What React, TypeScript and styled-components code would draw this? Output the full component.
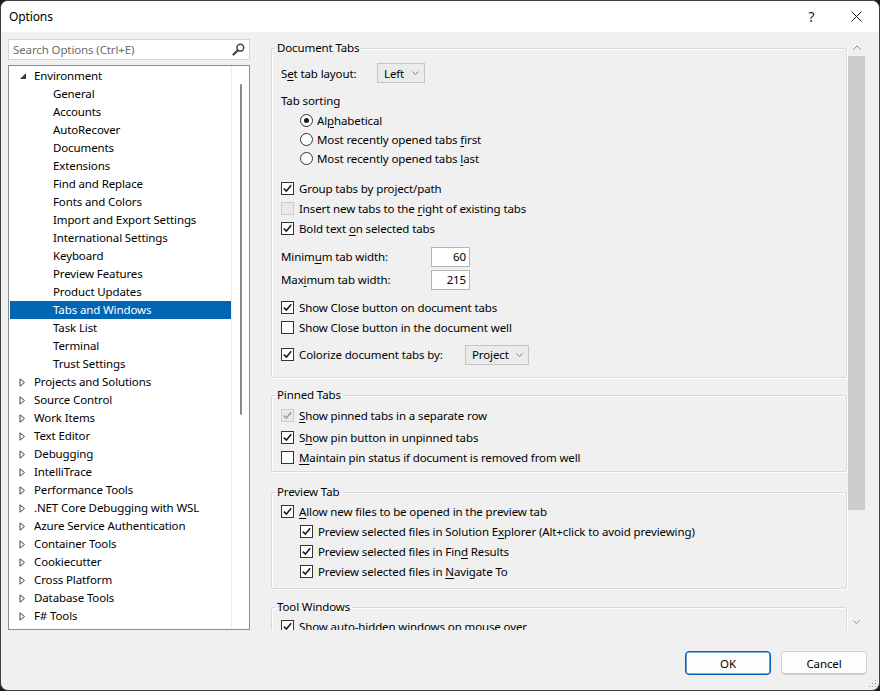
import React from 'react';
import styled, { createGlobalStyle } from 'styled-components';

const GlobalStyle = createGlobalStyle`
  html, body {
    margin: 0;
    padding: 0;
    background: #1c1c1c;
  }
  body {
    font-family: "Noto Sans", "Open Sans", sans-serif;
    font-size: 11.5px;
    letter-spacing: -0.12px;
    color: #000;
  }
  * { box-sizing: border-box; }
`;

const Window = styled.div`
  position: relative;
  width: 880px;
  height: 691px;
  background: #f0f0f0;
  border: 1px solid #3d3d3d;
  border-radius: 8px;
  overflow: hidden;
  display: flex;
  flex-direction: column;
`;

const TitleBar = styled.div`
  flex: none;
  height: 31px;
  background: #fff;
  display: flex;
  align-items: center;
  padding-left: 8px;
  font-size: 12px;
`;

const TitleButtons = styled.div`
  margin-left: auto;
  display: flex;
  height: 100%;
`;

const TitleButton = styled.div`
  width: 45px;
  height: 100%;
  display: flex;
  align-items: center;
  justify-content: center;
  font-size: 14px;
  color: #1a1a1a;
`;

const Body = styled.div`
  flex: none;
  height: 598px;
  display: flex;
  gap: 20px;
  padding: 7px 14px 0 7px;
`;

const LeftColumn = styled.div`
  width: 242px;
  flex: none;
  display: flex;
  flex-direction: column;
  gap: 5px;
`;

const SearchBox = styled.div`
  height: 21px;
  flex: none;
  background: #fff;
  border: 1px solid #d3d3d3;
  display: flex;
  align-items: center;
  padding: 0 4px 1px 4px;
  color: #6d6d6d;
  svg { margin-left: auto; }
`;

const Tree = styled.div`
  flex: 1;
  background: #fff;
  border: 1px solid #8c8c8c;
  display: flex;
  overflow: hidden;
`;

const TreeList = styled.div`
  flex: 1;
  padding: 1px 0 0 1px;
  display: flex;
  flex-direction: column;
`;

const TreeRow = styled.div<{ $level: number; $selected?: boolean }>`
  height: 18px;
  flex: none;
  display: flex;
  align-items: center;
  padding-left: ${(p) => 9 + p.$level * 19}px;
  padding-bottom: 2px;
  background: ${(p) => (p.$selected ? '#0066b4' : 'transparent')};
  color: ${(p) => (p.$selected ? '#fff' : '#000')};
  white-space: nowrap;
`;

const Arrow = styled.span`
  width: 15px;
  flex: none;
  display: flex;
  align-items: center;
  padding-top: 2px;
`;

const TreeTrack = styled.div`
  width: 18px;
  flex: none;
  border-left: 1px solid #ececec;
  display: flex;
  flex-direction: column;
  align-items: center;
  padding-top: 18px;
`;

const TreeThumb = styled.div`
  width: 2px;
  height: 331px;
  background: #8a8a8a;
  border-radius: 1px;
`;

const RightColumn = styled.div`
  flex: 1;
  display: flex;
`;

const Viewport = styled.div`
  width: 578px;
  flex: none;
  height: 591px;
  overflow: hidden;
  padding: 1px 1px 0 1px;
`;

const ScrollBar = styled.div`
  width: 17px;
  flex: none;
  height: 591px;
  display: flex;
  flex-direction: column;
`;

const ScrollArrow = styled.div`
  height: 17px;
  flex: none;
  display: flex;
  align-items: center;
  justify-content: center;
`;

const ScrollThumb = styled.div`
  height: 454px;
  flex: none;
  background: #cdcdcd;
`;

const Spacer = styled.div`
  flex: 1;
`;

const Group = styled.fieldset<{ $mt: number; $pb: number }>`
  margin: ${(p) => p.$mt}px 0 0 0;
  padding: 0 0 ${(p) => p.$pb}px 3px;
  border: 1px solid #d9d9d9;
  border-radius: 2px;
  box-shadow: 1px 1px 0 #fff, inset 1px 1px 0 #fff;
  min-width: 0;
`;

const Legend = styled.legend`
  padding: 0 2px;
  line-height: 16px;
`;

const Row = styled.div<{ $h?: number; $mt?: number; $indent?: number; $gap?: number }>`
  height: ${(p) => p.$h ?? 20}px;
  margin-top: ${(p) => p.$mt ?? 0}px;
  padding-left: ${(p) => 6 + (p.$indent ?? 0)}px;
  display: flex;
  align-items: center;
  gap: ${(p) => p.$gap ?? 5}px;
  white-space: nowrap;
`;

const Label = styled.span<{ $w?: number }>`
  width: ${(p) => (p.$w ? `${p.$w}px` : 'auto')};
  flex: none;
`;

const U = styled.span`
  text-decoration: underline;
  text-underline-offset: 2px;
`;

const Box = styled.span<{ $disabled?: boolean }>`
  width: 13px;
  height: 13px;
  flex: none;
  border: 1px solid ${(p) => (p.$disabled ? '#cccccc' : '#333')};
  background: ${(p) => (p.$disabled ? '#e9e9e9' : '#fff')};
  display: inline-flex;
  align-items: center;
  justify-content: center;
`;

const RadioCircle = styled.span<{ $on?: boolean }>`
  width: 13px;
  height: 13px;
  flex: none;
  border: 1px solid #333;
  border-radius: 50%;
  background: #fff;
  display: inline-flex;
  align-items: center;
  justify-content: center;
  &::after {
    content: '';
    width: 5px;
    height: 5px;
    border-radius: 50%;
    background: ${(p) => (p.$on ? '#1a1a1a' : 'transparent')};
  }
`;

const Combo = styled.div<{ $w: number }>`
  width: ${(p) => p.$w}px;
  height: 20px;
  flex: none;
  border: 1px solid #c6c6c6;
  background: #ebebeb;
  display: flex;
  align-items: center;
  justify-content: space-between;
  padding: 0 5px 0 6px;
`;

const NumBox = styled.div`
  width: 39px;
  height: 20px;
  flex: none;
  border: 1px solid #b4b4b4;
  background: #fff;
  display: flex;
  align-items: center;
  justify-content: flex-end;
  padding-right: 3px;
`;

const Footer = styled.div`
  flex: 1;
  display: flex;
  justify-content: flex-end;
  align-items: flex-start;
  gap: 10px;
  padding: 21px 12px 0 0;
`;

const Button = styled.div<{ $primary?: boolean }>`
  width: 86px;
  height: 24px;
  border-radius: 4px;
  background: #fdfdfd;
  border: 1px solid ${(p) => (p.$primary ? '#005fb8' : '#d0d0d0')};
  box-shadow: ${(p) => (p.$primary ? 'inset 0 0 0 0.6px #005fb8' : 'inset 0 -1px 0 #c4c4c4')};
  display: flex;
  align-items: center;
  justify-content: center;
`;

const Grip = styled.svg`
  position: absolute;
  right: 2px;
  bottom: 2px;
`;

const Check = ({ color = '#1a1a1a' }: { color?: string }) => (
  <svg width="9" height="9" viewBox="0 0 9 9">
    <path d="M0.8 4.6 L3.4 7.1 L8.2 1.3" fill="none" stroke={color} strokeWidth="1.5" />
  </svg>
);

const CheckBox = ({ checked, disabled }: { checked?: boolean; disabled?: boolean }) => (
  <Box $disabled={disabled}>{checked && <Check color={disabled ? '#9b9b9b' : '#1a1a1a'} />}</Box>
);

const ChevronDown = ({ color = '#7a7a7a' }: { color?: string }) => (
  <svg width="7" height="4" viewBox="0 0 7 4">
    <polyline points="0.5,0.5 3.5,3.5 6.5,0.5" fill="none" stroke={color} strokeWidth="1" />
  </svg>
);

const ChevronUp = ({ color = '#8a8a8a' }: { color?: string }) => (
  <svg width="8" height="5" viewBox="0 0 8 5">
    <polyline points="0.5,4.5 4,1 7.5,4.5" fill="none" stroke={color} strokeWidth="1" />
  </svg>
);

type Node = { label: string; level: number; expanded?: boolean; leaf?: boolean; selected?: boolean };

const children = [
  'General', 'Accounts', 'AutoRecover', 'Documents', 'Extensions', 'Find and Replace', 'Fonts and Colors',
  'Import and Export Settings', 'International Settings', 'Keyboard', 'Preview Features', 'Product Updates',
  'Tabs and Windows', 'Task List', 'Terminal', 'Trust Settings',
];

const topLevel = [
  'Projects and Solutions', 'Source Control', 'Work Items', 'Text Editor', 'Debugging', 'IntelliTrace',
  'Performance Tools', '.NET Core Debugging with WSL', 'Azure Service Authentication', 'Container Tools',
  'Cookiecutter', 'Cross Platform', 'Database Tools', 'F# Tools',
];

const nodes: Node[] = [
  { label: 'Environment', level: 0, expanded: true },
  ...children.map((c) => ({ label: c, level: 1, leaf: true, selected: c === 'Tabs and Windows' })),
  ...topLevel.map((c) => ({ label: c, level: 0 })),
];

const TreeArrow = ({ node }: { node: Node }) => {
  if (node.leaf) return <Arrow />;
  return (
    <Arrow>
      {node.expanded ? (
        <svg width="8" height="8" viewBox="0 0 8 8">
          <polygon points="7,1 7,7 1,7" fill="#3a3a3a" />
        </svg>
      ) : (
        <svg width="7" height="9" viewBox="0 0 7 9">
          <polygon points="1,0.8 5.5,4.5 1,8.2" fill="none" stroke="#444" strokeWidth="1" />
        </svg>
      )}
    </Arrow>
  );
};

const App: React.FC = () => {
  return (
    <>
      <GlobalStyle />
      <Window>
        <TitleBar>
          Options
          <TitleButtons>
            <TitleButton>?</TitleButton>
            <TitleButton>
              <svg width="11" height="11" viewBox="0 0 11 11">
                <path d="M0.5 0.5 L10.5 10.5 M10.5 0.5 L0.5 10.5" stroke="#1a1a1a" strokeWidth="1" />
              </svg>
            </TitleButton>
          </TitleButtons>
        </TitleBar>

        <Body>
          <LeftColumn>
            <SearchBox>
              Search Options (Ctrl+E)
              <svg width="13" height="13" viewBox="0 0 13 13">
                <circle cx="8.3" cy="4.7" r="3.4" fill="none" stroke="#444" strokeWidth="1.5" />
                <path d="M5.8 7.2 L1.5 11.5" stroke="#444" strokeWidth="2.2" strokeLinecap="round" />
              </svg>
            </SearchBox>
            <Tree>
              <TreeList>
                {nodes.map((n) => (
                  <TreeRow key={n.label} $level={n.level} $selected={n.selected}>
                    <TreeArrow node={n} />
                    {n.label}
                  </TreeRow>
                ))}
              </TreeList>
              <TreeTrack>
                <TreeThumb />
              </TreeTrack>
            </Tree>
          </LeftColumn>

          <RightColumn>
            <Viewport>
              <Group $mt={0} $pb={12}>
                <Legend>Document Tabs</Legend>
                <Row $h={24} $mt={5} $gap={0}>
                  <Label $w={96}>S<U>e</U>t tab layout:</Label>
                  <Combo $w={48}>
                    Left <ChevronDown />
                  </Combo>
                </Row>
                <Row $mt={5}>Tab sorting</Row>
                <Row $h={19} $mt={1} $indent={19} $gap={4}>
                  <RadioCircle $on />
                  <span>Al<U>p</U>habetical</span>
                </Row>
                <Row $h={19} $indent={19} $gap={4}>
                  <RadioCircle />
                  <span>Most recently opened tabs <U>f</U>irst</span>
                </Row>
                <Row $h={19} $indent={19} $gap={4}>
                  <RadioCircle />
                  <span>Most recently opened tabs <U>l</U>ast</span>
                </Row>
                <Row $mt={10}>
                  <CheckBox checked />
                  <span>Group tabs by project/path</span>
                </Row>
                <Row>
                  <CheckBox disabled />
                  <span>Insert new tabs to the <U>r</U>ight of existing tabs</span>
                </Row>
                <Row>
                  <CheckBox checked />
                  <span>Bold text <U>o</U>n selected tabs</span>
                </Row>
                <Row $h={21} $mt={8} $gap={0}>
                  <Label $w={150}>Minim<U>u</U>m tab width:</Label>
                  <NumBox>60</NumBox>
                </Row>
                <Row $h={21} $mt={2} $gap={0}>
                  <Label $w={150}>Max<U>i</U>mum tab width:</Label>
                  <NumBox>215</NumBox>
                </Row>
                <Row $mt={7}>
                  <CheckBox checked />
                  <span>Show Close button on document tabs</span>
                </Row>
                <Row>
                  <CheckBox />
                  <span>Show Close button in the document well</span>
                </Row>
                <Row $h={21} $mt={7}>
                  <CheckBox checked />
                  <Label $w={161}>Colorize document tabs by:</Label>
                  <Combo $w={64}>
                    Project <ChevronDown />
                  </Combo>
                </Row>
              </Group>

              <Group $mt={9} $pb={4}>
                <Legend>Pinned Tabs</Legend>
                <Row $mt={2}>
                  <CheckBox checked disabled />
                  <span><U>S</U>how pinned tabs in a separate row</span>
                </Row>
                <Row $mt={2}>
                  <CheckBox checked />
                  <span>S<U>h</U>ow pin button in unpinned tabs</span>
                </Row>
                <Row>
                  <CheckBox />
                  <span><U>M</U>aintain pin status if document is removed from well</span>
                </Row>
              </Group>

              <Group $mt={12} $pb={7}>
                <Legend>Preview Tab</Legend>
                <Row $mt={1}>
                  <CheckBox checked />
                  <span><U>A</U>llow new files to be opened in the preview tab</span>
                </Row>
                <Row $indent={19}>
                  <CheckBox checked />
                  <span>Preview selected files in Solution E<U>x</U>plorer (Alt+click to avoid previewing)</span>
                </Row>
                <Row $indent={19}>
                  <CheckBox checked />
                  <span>Preview selected files in Fin<U>d</U> Results</span>
                </Row>
                <Row $indent={19}>
                  <CheckBox checked />
                  <span>Preview selected files in <U>N</U>avigate To</span>
                </Row>
              </Group>

              <Group $mt={10} $pb={8}>
                <Legend>Tool Windows</Legend>
                <Row $mt={1}>
                  <CheckBox checked />
                  <span>Show auto-hidden windows on mouse over</span>
                </Row>
              </Group>
            </Viewport>
            <ScrollBar>
              <ScrollArrow>
                <ChevronUp />
              </ScrollArrow>
              <ScrollThumb />
              <Spacer />
              <ScrollArrow>
                <ChevronDown color="#8a8a8a" />
              </ScrollArrow>
            </ScrollBar>
          </RightColumn>
        </Body>

        <Footer>
          <Button $primary>OK</Button>
          <Button>Cancel</Button>
        </Footer>
        <Grip width="9" height="9" viewBox="0 0 9 9">
          <rect x="7" y="1" width="1" height="1" fill="#9a9a9a" />
          <rect x="4" y="4" width="1" height="1" fill="#9a9a9a" />
          <rect x="7" y="4" width="1" height="1" fill="#9a9a9a" />
          <rect x="1" y="7" width="1" height="1" fill="#9a9a9a" />
          <rect x="4" y="7" width="1" height="1" fill="#9a9a9a" />
          <rect x="7" y="7" width="1" height="1" fill="#9a9a9a" />
        </Grip>
      </Window>
    </>
  );
};

export default App;
